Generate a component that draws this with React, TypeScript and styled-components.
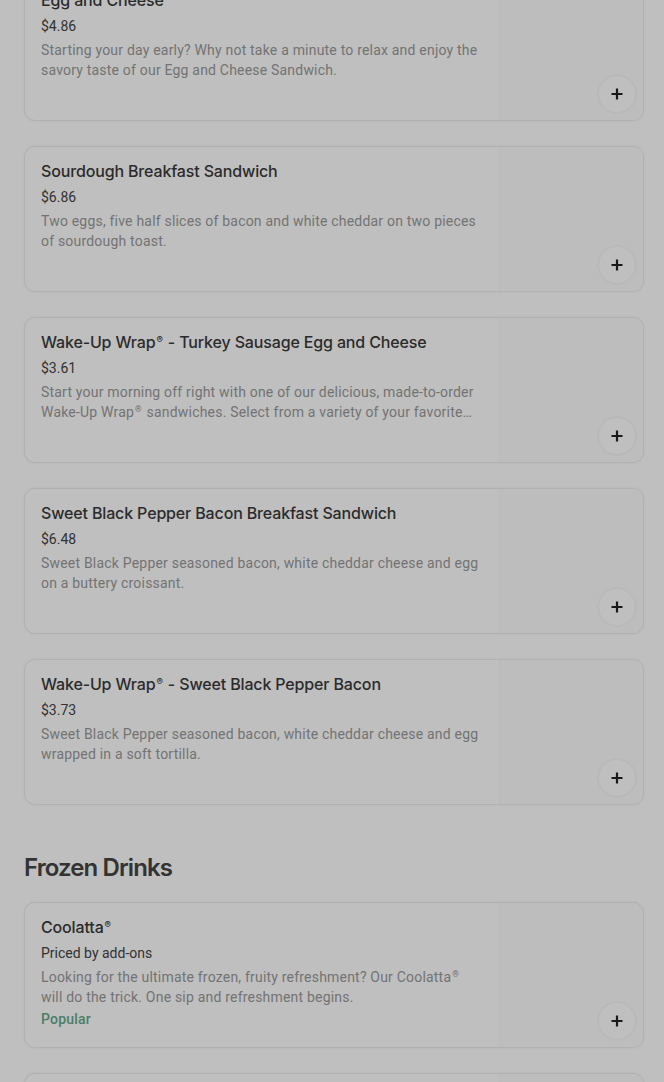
import styled, { createGlobalStyle } from "styled-components";

const GlobalStyle = createGlobalStyle`
  html, body {
    margin: 0;
    padding: 0;
    background: #ffffff;
  }
  body {
    font-family: "Roboto", "Liberation Sans", sans-serif;
    overflow: hidden;
  }
`;

const Page = styled.div`
  width: 664px;
  height: 1082px;
  overflow: hidden;
  position: relative;
  background: #ffffff;
`;

const Content = styled.div`
  margin-top: -25px;
  padding: 0 20px 0 24px;
  display: flex;
  flex-direction: column;
`;

const Section = styled.section`
  display: flex;
  flex-direction: column;
  gap: 25px;
`;

const SectionTitle = styled.h2`
  margin: 47px 0 18px;
  font-family: "Inter", "Liberation Sans", sans-serif;
  font-size: 24px;
  line-height: 32px;
  font-weight: 600;
  letter-spacing: -0.9px;
  color: #444;
`;

const Card = styled.div`
  position: relative;
  height: 146px;
  box-sizing: border-box;
  border: 1px solid #ececec;
  border-radius: 11px;
  box-shadow: 0 0 3px rgba(0, 0, 0, 0.05);
  background: #fff;
  display: flex;
  overflow: hidden;
`;

const Info = styled.div`
  flex: 1;
  padding: 12px 16px 0 16px;
  display: flex;
  flex-direction: column;
  min-width: 0;
`;

const Title = styled.div`
  font-family: "Inter", "Liberation Sans", sans-serif;
  font-size: 16px;
  line-height: 24px;
  font-weight: 500;
  letter-spacing: -0.15px;
  color: #3a3a3a;
`;

const Reg = styled.span`
  font-size: 0.6em;
  vertical-align: 0.55em;
  line-height: 0;
  margin: 0 1px;
`;

const Price = styled.div`
  margin-top: 4px;
  font-size: 14px;
  line-height: 20px;
  color: #444;
`;

const Desc = styled.div`
  margin-top: 4px;
  font-size: 14px;
  line-height: 20px;
  letter-spacing: 0.2px;
  color: #9a9a9a;
  display: -webkit-box;
  -webkit-line-clamp: 2;
  -webkit-box-orient: vertical;
  overflow: hidden;
`;

const Tag = styled.div`
  margin-top: 2px;
  font-size: 14px;
  line-height: 20px;
  font-weight: 500;
  letter-spacing: 0.2px;
  color: #66a88a;
`;

const Thumb = styled.div`
  width: 143px;
  flex-shrink: 0;
  background: #fdfdfd;
  border-left: 1px solid #f8f8f8;
`;

const AddButton = styled.button`
  position: absolute;
  right: 8px;
  bottom: 8px;
  width: 36px;
  height: 36px;
  border-radius: 50%;
  border: none;
  background: #fff;
  box-shadow: 0 0 4px rgba(0, 0, 0, 0.08);
  display: flex;
  align-items: center;
  justify-content: center;
  padding: 0;
`;

const Overlay = styled.div`
  position: fixed;
  inset: 0;
  background: rgba(0, 0, 0, 0.25);
  pointer-events: none;
`;

type Item = {
  title: string;
  price: string;
  desc: string;
  tag?: string;
};

const breakfast: Item[] = [
  {
    title: "Egg and Cheese",
    price: "$4.86",
    desc: "Starting your day early? Why not take a minute to relax and enjoy the savory taste of our Egg and Cheese Sandwich.",
  },
  {
    title: "Sourdough Breakfast Sandwich",
    price: "$6.86",
    desc: "Two eggs, five half slices of bacon and white cheddar on two pieces of sourdough toast.",
  },
  {
    title: "Wake-Up Wrap® - Turkey Sausage Egg and Cheese",
    price: "$3.61",
    desc: "Start your morning off right with one of our delicious, made-to-order Wake-Up Wrap® sandwiches. Select from a variety of your favorite breakfast ingredients.",
  },
  {
    title: "Sweet Black Pepper Bacon Breakfast Sandwich",
    price: "$6.48",
    desc: "Sweet Black Pepper seasoned bacon, white cheddar cheese and egg on a buttery croissant.",
  },
  {
    title: "Wake-Up Wrap® - Sweet Black Pepper Bacon",
    price: "$3.73",
    desc: "Sweet Black Pepper seasoned bacon, white cheddar cheese and egg wrapped in a soft tortilla.",
  },
];

const frozen: Item[] = [
  {
    title: "Coolatta®",
    price: "Priced by add-ons",
    desc: "Looking for the ultimate frozen, fruity refreshment? Our Coolatta® will do the trick. One sip and refreshment begins.",
    tag: "Popular",
  },
  {
    title: "Frozen Coffee",
    price: "$4.29",
    desc: "Our Frozen Coffee is a creamy, smooth blend of our rich coffee flavor.",
  },
];

function withReg(text: string) {
  const parts = text.split("®");
  return parts.map((p, i) => (
    <span key={i}>
      {p}
      {i < parts.length - 1 && <Reg>®</Reg>}
    </span>
  ));
}

function PlusIcon() {
  return (
    <svg width="16" height="16" viewBox="0 0 16 16">
      <path d="M8 2.5v11M2.5 8h11" stroke="#222" strokeWidth="2.2" />
    </svg>
  );
}

function MenuCard({ item }: { item: Item }) {
  return (
    <Card>
      <Info>
        <Title>{withReg(item.title)}</Title>
        <Price>{item.price}</Price>
        <Desc>{withReg(item.desc)}</Desc>
        {item.tag && <Tag>{item.tag}</Tag>}
      </Info>
      <Thumb />
      <AddButton aria-label="Add">
        <PlusIcon />
      </AddButton>
    </Card>
  );
}

export default function App() {
  return (
    <Page>
      <GlobalStyle />
      <Content>
        <Section>
          {breakfast.map((it) => (
            <MenuCard key={it.title} item={it} />
          ))}
        </Section>
        <SectionTitle>Frozen Drinks</SectionTitle>
        <Section>
          {frozen.map((it) => (
            <MenuCard key={it.title} item={it} />
          ))}
        </Section>
      </Content>
      <Overlay />
    </Page>
  );
}
